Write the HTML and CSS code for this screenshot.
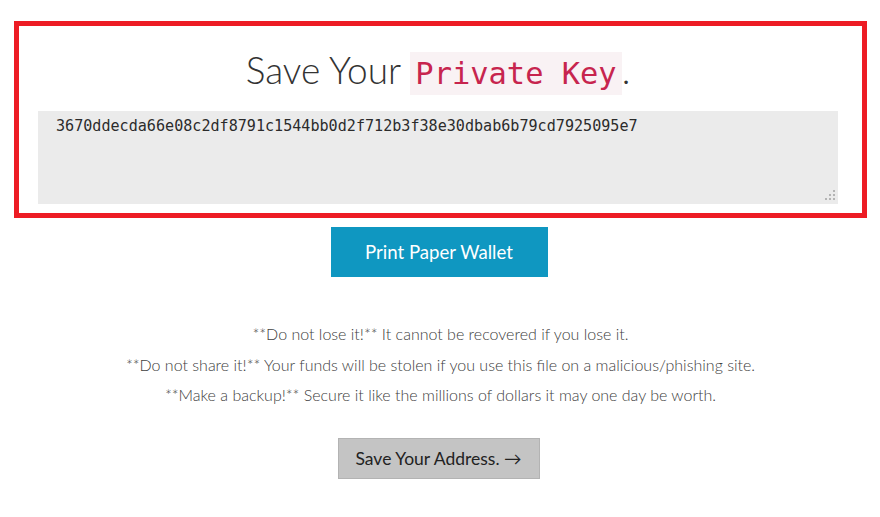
FILE: index.html
```html
<!DOCTYPE html>
<html lang="en">
<head>
<meta charset="utf-8">
<title>Save Your Private Key</title>
<link rel="stylesheet" href="styles.css">
</head>
<body>
<main class="page">
  <section class="key-box">
    <h1 class="title">Save Your <code class="code">Private Key</code>.</h1>
    <div class="field">
      <textarea class="key-input" readonly>3670ddecda66e08c2df8791c1544bb0d2f712b3f38e30dbab6b79cd7925095e7</textarea>
      <svg class="grip" width="10" height="10" viewBox="0 0 10 10" aria-hidden="true">
        <rect x="8" y="0" width="2" height="2" fill="#b4b4b4"/>
        <rect x="4" y="4" width="2" height="2" fill="#b4b4b4"/>
        <rect x="8" y="4" width="2" height="2" fill="#b4b4b4"/>
        <rect x="0" y="8" width="2" height="2" fill="#b4b4b4"/>
        <rect x="4" y="8" width="2" height="2" fill="#b4b4b4"/>
        <rect x="8" y="8" width="2" height="2" fill="#b4b4b4"/>
      </svg>
    </div>
  </section>
  <div class="print-row">
    <button class="btn-print" type="button">Print Paper Wallet</button>
  </div>
  <div class="warnings">
    <p>**Do not lose it!** It cannot be recovered if you lose it.</p>
    <p>**Do not share it!** Your funds will be stolen if you use this file on a malicious/phishing site.</p>
    <p>**Make a backup!** Secure it like the millions of dollars it may one day be worth.</p>
  </div>
  <div class="next-row">
    <button class="btn-next" type="button">Save Your Address. &rarr;</button>
  </div>
</main>
</body>
</html>
```
FILE: styles.css
```css
html, body {
  margin: 0;
  padding: 0;
  background: #ffffff;
}
body {
  font-family: Lato, "Open Sans", sans-serif;
  color: #333333;
}
.page {
  padding: 21px 13px 0 14px;
  display: flex;
  flex-direction: column;
}
.key-box {
  border: 5px solid #ed1c24;
  padding: 0 24px 9px 19px;
  display: flex;
  flex-direction: column;
}
.title {
  margin: 22px 0 20px;
  text-align: center;
  font-weight: 300;
  font-size: 37px;
  line-height: 43px;
  height: 43px;
  color: #333333;
  display: flex;
  justify-content: center;
  align-items: baseline;
  white-space: pre;
}
.code {
  font-family: "DejaVu Sans Mono", monospace;
  font-size: 30.4px;
  font-weight: 400;
  color: #c7254e;
  background: #f9f2f4;
  padding: 0 5px;
  line-height: 43px;
  height: 43px;
  display: inline-block;
}
.field {
  position: relative;
  width: 800px;
  height: 93px;
}
.key-input {
  box-sizing: border-box;
  width: 800px;
  height: 93px;
  margin: 0;
  border: none;
  outline: none;
  resize: none;
  background: #ebebeb;
  padding: 5px 18px;
  font-family: "DejaVu Sans Mono", monospace;
  font-size: 15.1px;
  line-height: 20px;
  color: #2b2b2b;
  display: block;
}
.grip {
  position: absolute;
  right: 3px;
  bottom: 4px;
}
.print-row {
  display: flex;
  justify-content: center;
  margin-top: 9px;
  padding-right: 3px;
}
.btn-print {
  width: 217px;
  height: 50px;
  border: none;
  background: #0f97c1;
  color: #ffffff;
  font-family: Lato, sans-serif;
  font-size: 18.6px;
  font-weight: 400;
  padding: 0;
}
.warnings {
  margin-top: 42px;
  text-align: center;
  font-size: 16px;
  font-weight: 300;
  color: #404040;
}
.warnings p {
  margin: 0;
  line-height: 30.5px;
}
.next-row {
  display: flex;
  justify-content: center;
  margin-top: 27px;
  padding-right: 4px;
}
.btn-next {
  width: 202px;
  height: 41px;
  border: 1px solid #b3b3b3;
  background: #c4c4c4;
  color: #222222;
  font-family: Lato, sans-serif;
  font-size: 17.5px;
  font-weight: 400;
  padding: 0;
}
```
